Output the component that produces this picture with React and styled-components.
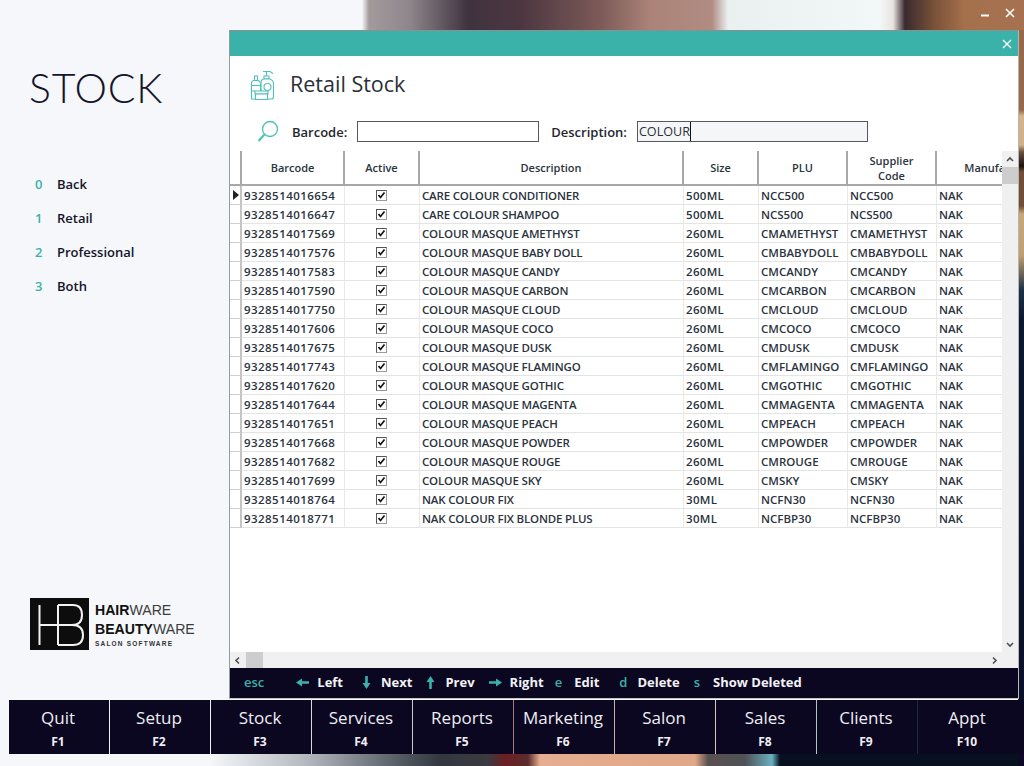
import React from "react";
import styled, { createGlobalStyle } from "styled-components";

const stock = [
  ["9328514016654", "CARE COLOUR CONDITIONER", "500ML", "NCC500"],
  ["9328514016647", "CARE COLOUR SHAMPOO", "500ML", "NCS500"],
  ["9328514017569", "COLOUR MASQUE AMETHYST", "260ML", "CMAMETHYST"],
  ["9328514017576", "COLOUR MASQUE BABY DOLL", "260ML", "CMBABYDOLL"],
  ["9328514017583", "COLOUR MASQUE CANDY", "260ML", "CMCANDY"],
  ["9328514017590", "COLOUR MASQUE CARBON", "260ML", "CMCARBON"],
  ["9328514017750", "COLOUR MASQUE CLOUD", "260ML", "CMCLOUD"],
  ["9328514017606", "COLOUR MASQUE COCO", "260ML", "CMCOCO"],
  ["9328514017675", "COLOUR MASQUE DUSK", "260ML", "CMDUSK"],
  ["9328514017743", "COLOUR MASQUE FLAMINGO", "260ML", "CMFLAMINGO"],
  ["9328514017620", "COLOUR MASQUE GOTHIC", "260ML", "CMGOTHIC"],
  ["9328514017644", "COLOUR MASQUE MAGENTA", "260ML", "CMMAGENTA"],
  ["9328514017651", "COLOUR MASQUE PEACH", "260ML", "CMPEACH"],
  ["9328514017668", "COLOUR MASQUE POWDER", "260ML", "CMPOWDER"],
  ["9328514017682", "COLOUR MASQUE ROUGE", "260ML", "CMROUGE"],
  ["9328514017699", "COLOUR MASQUE SKY", "260ML", "CMSKY"],
  ["9328514018764", "NAK COLOUR FIX", "30ML", "NCFN30"],
  ["9328514018771", "NAK COLOUR FIX BLONDE PLUS", "30ML", "NCFBP30"],
];

const sideMenu = [
  ["0", "Back"],
  ["1", "Retail"],
  ["2", "Professional"],
  ["3", "Both"],
];

const fKeys = [
  ["Quit", "F1", "#f0f0f4"],
  ["Setup", "F2", "#f0f0f4"],
  ["Stock", "F3", "#d8d8e0"],
  ["Services", "F4", "#cfc8cc"],
  ["Reports", "F5", "#a8787c"],
  ["Marketing", "F6", "#c8b0a8"],
  ["Salon", "F7", "#d8c8c0"],
  ["Sales", "F8", "#b8c0c8"],
  ["Clients", "F9", "#1c2a40"],
  ["Appt", "F10", "transparent"],
];

const GlobalStyle = createGlobalStyle`
  html, body {
    margin: 0;
    padding: 0;
    overflow: hidden;
    background: #f5f7fa;
  }
  * {
    box-sizing: border-box;
  }
`;

const Page = styled.div`
  display: flex;
  flex-direction: column;
  width: 1024px;
  height: 766px;
  overflow: hidden;
  position: relative;
  font-family: "Open Sans", "Noto Sans", sans-serif;
  background-color: #f5f7fa;
  background-repeat: no-repeat;
  background-image:
    linear-gradient(90deg, #f5f7fa 0, #f5f7fa 362px, #a39a9c 369px, #8e868b 410px, #3f3340 468px, #4c3640 520px, #7c5a58 600px, #ab8378 650px, #b08c82 712px, #eaf0f0 728px, #f2f7f7 880px, #e8e4e0 893px, #3a2a2f 905px, #7a5238 935px, #a5714d 965px, #a5714f 1024px),
    linear-gradient(180deg, #96694a 0, #96694a 80px, #d4b48e 86px, #d0b08c 115px, #6a5040 122px, #1c1410 136px, #704f38 142px, #704f38 176px, #c8a878 184px, #c0a070 225px, #203048 260px, #0a1730 290px, #0a1028 670px, #0b0822 736px),
    linear-gradient(90deg, #f5f7fa 0, #f5f7fa 210px, #b4babf 305px, #4c525a 410px, #33383e 440px, #3a3a40 488px, #6b1f22 505px, #5a2c2c 528px, #e6ae90 540px, #e0a888 695px, #5a5050 708px, #4f5256 745px, #6ab0c0 772px, #06101f 780px, #06101f 1024px);
  background-size: 100% 30px, 6px 736px, 100% 12px;
  background-position: 0 0, 100% 30px, 0 100%;
`;

const Main = styled.div`
  display: flex;
  height: 700px;
  padding-top: 30px;
`;

const Sidebar = styled.aside`
  display: flex;
  flex-direction: column;
  flex: 0 0 229px;
  padding: 34px 0 50px 29px;
`;

const Heading = styled.h1`
  margin: 0;
  font-family: Lato, "Open Sans", sans-serif;
  font-size: 41px;
  line-height: 48px;
  font-weight: 300;
  letter-spacing: 0.8px;
  color: #14152a;
`;

const SideList = styled.ul`
  display: flex;
  flex-direction: column;
  gap: 14px;
  list-style: none;
  margin: 62px 0 0 6px;
  padding: 0;
`;

const SideItem = styled.li`
  display: flex;
  height: 20px;
  align-items: center;
  font-size: 13px;
  font-weight: 600;
  color: #14152a;
`;

const SideKey = styled.span`
  width: 22px;
  color: #3ab2aa;
`;

const Logo = styled.div`
  display: flex;
  align-items: stretch;
  gap: 6px;
  margin: auto 0 0 1px;
`;

const LogoText = styled.div`
  display: flex;
  flex-direction: column;
  justify-content: center;
  font-family: "Liberation Sans", Arial, sans-serif;
  color: #1a1a1a;
`;

const LogoLine = styled.div`
  font-size: 14.1px;
  line-height: 19px;
  font-weight: 300;
  color: #3c3c3c;
  b {
    font-weight: 700;
    color: #111;
  }
`;

const LogoSmall = styled.div`
  font-size: 6.5px;
  line-height: 9px;
  font-weight: 700;
  letter-spacing: 1.2px;
  color: #333;
`;

const Win = styled.section`
  display: flex;
  flex-direction: column;
  width: 790px;
  height: 669px;
  background: #fff;
  border: 1px solid #9a9a9a;
  border-top-color: #8f8f8f;
  border-right-color: #b5b5b5;
  border-bottom-color: #c5c5c5;
`;

const TitleBar = styled.div`
  display: flex;
  flex: 0 0 25px;
  align-items: center;
  justify-content: flex-end;
  padding-right: 6px;
  background: #3ab2aa;
`;

const WinHead = styled.div`
  display: flex;
  align-items: center;
  height: 57px;
  padding-left: 19px;
`;

const WinTitle = styled.h2`
  margin: 0 0 3px 15px;
  font-size: 21.5px;
  font-weight: 400;
  color: #2b3038;
`;

const SearchRow = styled.div`
  display: flex;
  align-items: center;
  height: 21px;
  margin-top: 8px;
  padding-left: 27px;
`;

const FieldLabel = styled.label`
  margin: ${(p) => p.$margin};
  font-size: 13px;
  font-weight: 600;
  color: #23272e;
`;

const FieldBox = styled.div`
  display: flex;
  align-items: center;
  width: ${(p) => p.$width}px;
  height: 21px;
  padding-left: 1px;
  font-size: 12.6px;
  color: #2b3038;
  background: ${(p) => (p.$filled ? "#f5f6f8" : "#fff")};
  border: 1px solid #55585c;
`;

const Caret = styled.span`
  height: 100%;
  padding-top: 1px;
  border-right: 1px solid #111;
`;

const GridArea = styled.div`
  display: flex;
  flex: 1;
  min-height: 0;
  margin-top: 9px;
`;

const TableClip = styled.div`
  flex: 1;
  overflow: hidden;
`;

const Table = styled.table`
  table-layout: fixed;
  width: 835px;
  border-collapse: separate;
  border-spacing: 0;
  font-size: 11.5px;
  font-weight: 600;
  color: #2b3340;
`;

const HeadCell = styled.th`
  width: ${(p) => p.$width}px;
  height: 35px;
  padding: 0;
  font-size: 11px;
  line-height: 15px;
  font-weight: 600;
  text-align: center;
  color: #2b3340;
  background: #fff;
  border-right: 2px solid #a8a8a8;
  border-bottom: 2px solid #a8a8a8;
  &:last-child {
    border-right: 0;
  }
`;

const MarkerCell = styled.td`
  height: 19px;
  padding: 0;
  background: #fff;
  border-right: 2px solid #c4c4c4;
  border-bottom: 1px solid #cfcfcf;
`;

const Marker = styled.div`
  width: 0;
  height: 0;
  margin-left: 3px;
  border-top: 5px solid transparent;
  border-bottom: 5px solid transparent;
  border-left: 6px solid #222;
`;

const Cell = styled.td`
  height: 19px;
  padding: ${(p) => (p.$center ? "1px 2px 0 0" : "1px 0 0 2px")};
  overflow: hidden;
  white-space: nowrap;
  letter-spacing: ${(p) => p.$spacing || 0}px;
  border-right: 1px solid #e9e9e9;
  border-bottom: 1px solid #e4e4e4;
  text-align: ${(p) => (p.$center ? "center" : "left")};
  &:last-child {
    border-right: 0;
  }
`;

const CheckBox = styled.span`
  display: inline-flex;
  align-items: center;
  justify-content: center;
  width: 11px;
  height: 11px;
  background: #fff;
  border: 1px solid #999;
  border-top-color: #555;
  border-left-color: #555;
`;

const VScroll = styled.div`
  display: flex;
  flex: 0 0 16px;
  flex-direction: column;
  align-items: center;
  background: #f0f0f0;
`;

const ScrollBtn = styled.div`
  display: flex;
  flex: 0 0 16px;
  align-items: center;
  justify-content: center;
`;

const VThumb = styled.div`
  flex: 0 0 17px;
  width: 100%;
  background: #cdcdcd;
`;

const Spacer = styled.div`
  flex: 1;
`;

const HScroll = styled.div`
  display: flex;
  flex: 0 0 16px;
  background: #f0f0f0;
`;

const HThumb = styled.div`
  flex: 0 0 17px;
  background: #cdcdcd;
`;

const KeyBar = styled.div`
  display: flex;
  flex: 0 0 30px;
  align-items: center;
  padding-bottom: 2px;
  font-size: 13px;
  font-weight: 700;
  color: #f2f2f6;
  background: #0c0720;
`;

const Shortcut = styled.span`
  display: flex;
  align-items: center;
  margin-left: ${(p) => p.$left}px;
  gap: ${(p) => p.$gap}px;
`;

const ShortKey = styled.span`
  font-weight: 600;
  color: #3ab2aa;
`;

const FnBar = styled.nav`
  display: flex;
  height: 54px;
  margin-left: 9px;
  width: 1015px;
  background: #0c0720;
`;

const FnButton = styled.div`
  display: flex;
  flex: 0 0 101px;
  flex-direction: column;
  align-items: center;
  padding: 5px 2px 0 0;
  color: #eeeef4;
  border-right: 1px solid ${(p) => p.$line};
`;

const FnName = styled.span`
  font-size: 17px;
  line-height: 26px;
`;

const FnKey = styled.span`
  margin-top: 3px;
  font-size: 12px;
  line-height: 16px;
  font-weight: 700;
`;

const WinControls = styled.div`
  display: flex;
  align-items: center;
  gap: 15px;
  position: absolute;
  top: 8px;
  right: 9px;
`;

const CloseIcon = ({ size = 10, weight = 1.6 }) => (
  <svg width={size} height={size} viewBox="0 0 10 10">
    <path d="M1 1 9 9M9 1 1 9" stroke="#fff" strokeWidth={weight} fill="none" />
  </svg>
);

const Chevron = ({ dir }) => {
  const paths = {
    up: "M2 6 5 3 8 6",
    down: "M2 3 5 6 8 3",
    left: "M6 1.5 3 4.5 6 7.5",
    right: "M4 1.5 7 4.5 4 7.5",
  };
  return (
    <svg width="10" height="9" viewBox="0 0 10 9">
      <path d={paths[dir]} stroke="#505050" strokeWidth="1.6" fill="none" />
    </svg>
  );
};

const Arrow = ({ dir }) => {
  const rotate = { left: 0, up: 90, right: 180, down: 270 }[dir];
  return (
    <svg width="15" height="15" viewBox="0 0 15 15">
      <path
        transform={`rotate(${rotate} 7.5 7.5)`}
        d="M1 7.5 7 3.5V6.2H14V8.8H7V11.5Z"
        fill="#3ab2aa"
      />
    </svg>
  );
};

const BottleIcon = () => (
  <svg width="26" height="30" viewBox="0 0 26 30" fill="#fff" stroke="#4fc0b6" strokeWidth="1.1">
    <path d="M14 1.500H21L24 3.500M17.500 1.500V6" fill="none" />
    <path d="M15 6H20V9H15Z" />
    <path d="M14.500 9H21C23.500 10 24.500 12 24.500 14V27C24.500 28 23.500 29 22.500 29H12V12C12 11 13 9.500 14.500 9Z" />
    <circle cx="18.500" cy="17" r="3.500" />
    <path d="M5.500 6H8.500V10.500H5.500Z" />
    <path d="M4.500 10.500H9.500C11 11.500 11.500 13 11.500 14V29H2.500V13C2.500 12 3 11 4.500 10.500Z" />
    <path d="M2.500 15.500H11.500M2.500 21H6" fill="none" />
    <path d="M6 21H19V24H6Z" />
    <path d="M6.500 24H18.500V29.500H6.500Z" />
  </svg>
);

const SearchIcon = () => (
  <svg width="22" height="23" viewBox="0 0 22 23" fill="none" stroke="#4fc0b6">
    <circle cx="13" cy="9" r="7.500" strokeWidth="1.300" />
    <path d="M7.500 14.500 1.500 21" strokeWidth="2" />
  </svg>
);

const HbLogo = () => (
  <svg width="59" height="52" viewBox="0 0 59 52">
    <rect width="59" height="52" fill="#0d0d0d" />
    <path
      d="M9.500 7V47M9.500 27H42M28 7V47M28 7H43C50 7 52 12 52 17C52 23 49 27 42 27C50 27 53 31 53 37C53 43 50 47 43 47H28"
      stroke="#f2f2f2"
      strokeWidth="2"
      fill="none"
    />
  </svg>
);

const App = () => {
  return (
    <Page>
      <GlobalStyle />
      <WinControls>
        <svg width="10" height="10" viewBox="0 0 10 10">
          <path d="M1 7.500H9" stroke="#fff" strokeWidth="2" />
        </svg>
        <CloseIcon />
      </WinControls>
      <Main>
        <Sidebar>
          <Heading>STOCK</Heading>
          <SideList>
            {sideMenu.map(([key, label]) => (
              <SideItem key={key}>
                <SideKey>{key}</SideKey>
                {label}
              </SideItem>
            ))}
          </SideList>
          <Logo>
            <HbLogo />
            <LogoText>
              <LogoLine>
                <b>HAIR</b>WARE
              </LogoLine>
              <LogoLine>
                <b>BEAUTY</b>WARE
              </LogoLine>
              <LogoSmall>SALON SOFTWARE</LogoSmall>
            </LogoText>
          </Logo>
        </Sidebar>
        <Win>
          <TitleBar>
            <CloseIcon size={10} weight={1.4} />
          </TitleBar>
          <WinHead>
            <BottleIcon />
            <WinTitle>Retail Stock</WinTitle>
          </WinHead>
          <SearchRow>
            <SearchIcon />
            <FieldLabel $margin="0 10px 0 13px">Barcode:</FieldLabel>
            <FieldBox $width={182} />
            <FieldLabel $margin="0 10px 0 12px">Description:</FieldLabel>
            <FieldBox $width={231} $filled>
              <Caret>COLOUR</Caret>
            </FieldBox>
          </SearchRow>
          <GridArea>
            <TableClip>
              <Table>
                <thead>
                  <tr>
                    <HeadCell $width={12} />
                    <HeadCell $width={103}>Barcode</HeadCell>
                    <HeadCell $width={75}>Active</HeadCell>
                    <HeadCell $width={264}>Description</HeadCell>
                    <HeadCell $width={75}>Size</HeadCell>
                    <HeadCell $width={89}>PLU</HeadCell>
                    <HeadCell $width={89}>
                      Supplier
                      <br />
                      Code
                    </HeadCell>
                    <HeadCell $width={128}>Manufacturer</HeadCell>
                  </tr>
                </thead>
                <tbody>
                  {stock.map((row, index) => (
                    <tr key={row[0]}>
                      <MarkerCell>{index === 0 && <Marker />}</MarkerCell>
                      <Cell $spacing={0.45}>{row[0]}</Cell>
                      <Cell $center>
                        <CheckBox>
                          <svg width="9" height="9" viewBox="0 0 9 9">
                            <path d="M1.500 4 3.500 6.500 7.500 1.500" stroke="#111" strokeWidth="1.700" fill="none" />
                          </svg>
                        </CheckBox>
                      </Cell>
                      <Cell $spacing={-0.18}>{row[1]}</Cell>
                      <Cell $spacing={0.3}>{row[2]}</Cell>
                      <Cell>{row[3]}</Cell>
                      <Cell>{row[3]}</Cell>
                      <Cell>NAK</Cell>
                    </tr>
                  ))}
                </tbody>
              </Table>
            </TableClip>
            <VScroll>
              <ScrollBtn>
                <Chevron dir="up" />
              </ScrollBtn>
              <VThumb />
              <Spacer />
              <ScrollBtn>
                <Chevron dir="down" />
              </ScrollBtn>
            </VScroll>
          </GridArea>
          <HScroll>
            <ScrollBtn>
              <Chevron dir="left" />
            </ScrollBtn>
            <HThumb />
            <Spacer />
            <ScrollBtn>
              <Chevron dir="right" />
            </ScrollBtn>
            <ScrollBtn />
          </HScroll>
          <KeyBar>
            <Shortcut $left={14}>
              <ShortKey>esc</ShortKey>
            </Shortcut>
            <Shortcut $left={31} $gap={7}>
              <Arrow dir="left" />
              Left
            </Shortcut>
            <Shortcut $left={16} $gap={7}>
              <Arrow dir="down" />
              Next
            </Shortcut>
            <Shortcut $left={11} $gap={7}>
              <Arrow dir="up" />
              Prev
            </Shortcut>
            <Shortcut $left={13} $gap={7}>
              <Arrow dir="right" />
              Right
            </Shortcut>
            <Shortcut $left={11} $gap={12}>
              <ShortKey>e</ShortKey>
              Edit
            </Shortcut>
            <Shortcut $left={20} $gap={10}>
              <ShortKey>d</ShortKey>
              Delete
            </Shortcut>
            <Shortcut $left={14} $gap={13}>
              <ShortKey>s</ShortKey>
              Show Deleted
            </Shortcut>
          </KeyBar>
        </Win>
      </Main>
      <FnBar>
        {fKeys.map(([name, key, line]) => (
          <FnButton key={key} $line={line}>
            <FnName>{name}</FnName>
            <FnKey>{key}</FnKey>
          </FnButton>
        ))}
      </FnBar>
    </Page>
  );
};

export default App;
